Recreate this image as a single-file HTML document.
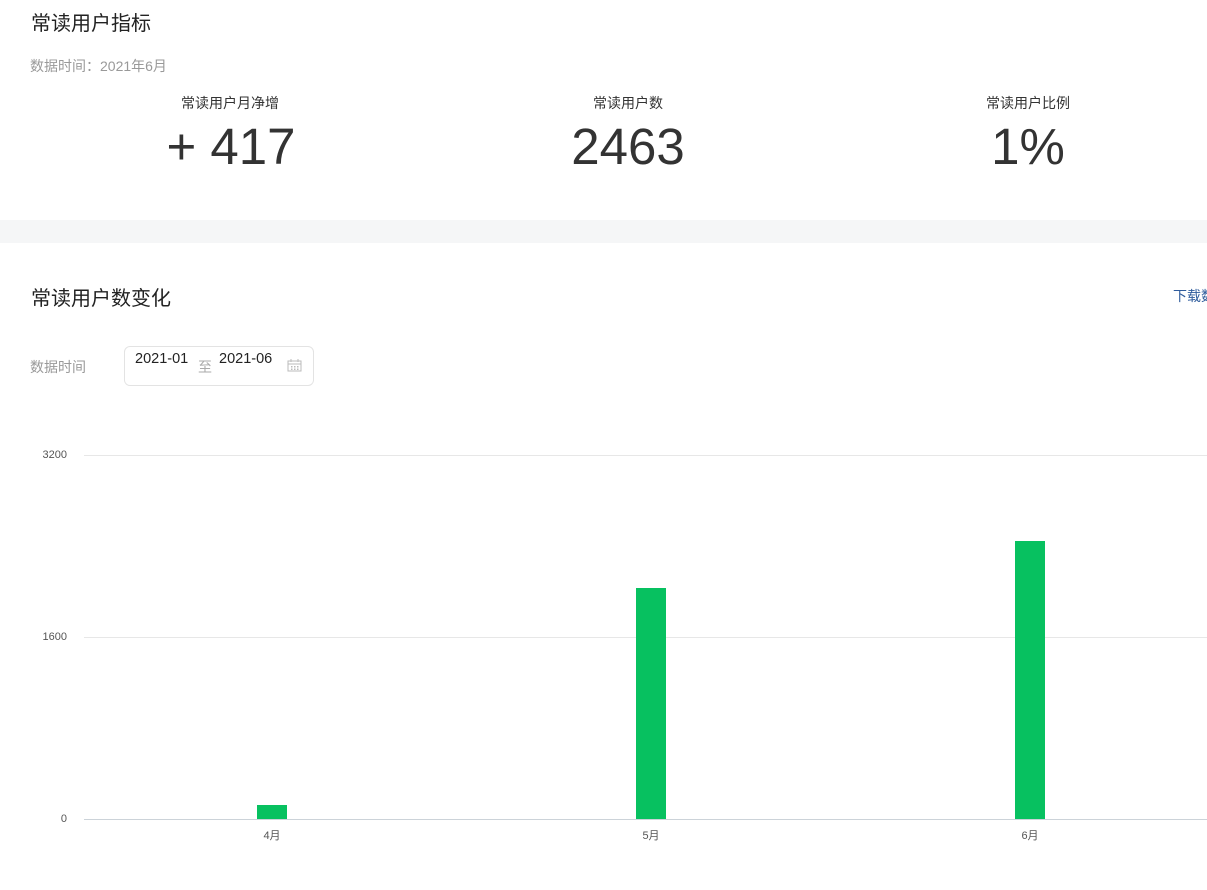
<!DOCTYPE html>
<html><head><meta charset="utf-8"><style>
*{margin:0;padding:0;box-sizing:border-box}
body{width:1207px;height:890px;background:#fff;position:relative;overflow:hidden;font-family:"Liberation Sans","Noto Sans CJK SC",sans-serif;color:#222}
.a{position:absolute;white-space:nowrap}
.t{font-size:20px;color:#222}
.s{font-size:14px;color:#999}
.lab{font-size:14px;color:#333;transform:translateX(-50%)}
.big{font-size:51px;color:#333;transform:translateX(-50%);line-height:1}
.grid{position:absolute;left:84px;right:0;height:1px;background:#e7e7e7}
.yl{position:absolute;font-size:11px;color:#555;right:1140px}
.bar{position:absolute;width:30px;background:#07c160;bottom:71px}
.xl{position:absolute;font-size:11px;color:#555;transform:translateX(-50%);top:827px}
</style></head><body>
<div class="a t" style="left:31px;top:7px">常读用户指标</div>
<div class="a s" style="left:30px;top:56px">数据时间：2021年6月</div>
<div class="a lab" style="left:230px;top:93px">常读用户月净增</div>
<div class="a lab" style="left:628px;top:93px">常读用户数</div>
<div class="a lab" style="left:1028px;top:93px">常读用户比例</div>
<div class="a big" style="left:231px;top:121px">+ 417</div>
<div class="a big" style="left:628px;top:121px">2463</div>
<div class="a big" style="left:1028px;top:121px">1%</div>
<div style="position:absolute;left:0;right:0;top:220px;height:23px;background:#f5f6f7"></div>
<div class="a t" style="left:31px;top:282px">常读用户数变化</div>
<div class="a" style="left:1173px;top:286px;font-size:14px;color:#2f5c9c">下载数据</div>
<div class="a s" style="left:30px;top:357px">数据时间</div>
<div style="position:absolute;left:124px;top:346px;width:190px;height:40px;border:1px solid #e3e3e3;border-radius:6px"></div>
<div class="a" style="left:135px;top:351px;font-size:14.5px;color:#222">2021-01</div>
<div class="a" style="left:198px;top:357px;font-size:14px;color:#aaa">至</div>
<div class="a" style="left:219px;top:351px;font-size:14.5px;color:#222">2021-06</div>
<svg style="position:absolute;left:287px;top:359px" width="15" height="13" viewBox="0 0 15 13"><rect x="1" y="2" width="13" height="10" fill="none" stroke="#bbb"/><line x1="1" y1="5" x2="14" y2="5" stroke="#bbb"/><line x1="4" y1="0" x2="4" y2="3" stroke="#bbb"/><line x1="11" y1="0" x2="11" y2="3" stroke="#bbb"/><g fill="#bbb"><rect x="4" y="7" width="1.5" height="1.5"/><rect x="7" y="7" width="1.5" height="1.5"/><rect x="10" y="7" width="1.5" height="1.5"/><rect x="4" y="9.5" width="1.5" height="1.5"/><rect x="7" y="9.5" width="1.5" height="1.5"/><rect x="10" y="9.5" width="1.5" height="1.5"/></g></svg>
<div class="grid" style="top:455px"></div>
<div class="grid" style="top:637px"></div>
<div class="grid" style="top:819px;background:#ccd3d9"></div>
<div class="yl" style="top:449px">3200</div>
<div class="yl" style="top:631px">1600</div>
<div class="yl" style="top:813px">0</div>
<div class="bar" style="left:257px;top:805px"></div>
<div class="bar" style="left:636px;top:588px"></div>
<div class="bar" style="left:1015px;top:541px"></div>
<div class="xl" style="left:272px">4月</div>
<div class="xl" style="left:651px">5月</div>
<div class="xl" style="left:1030px">6月</div>
</body></html>
